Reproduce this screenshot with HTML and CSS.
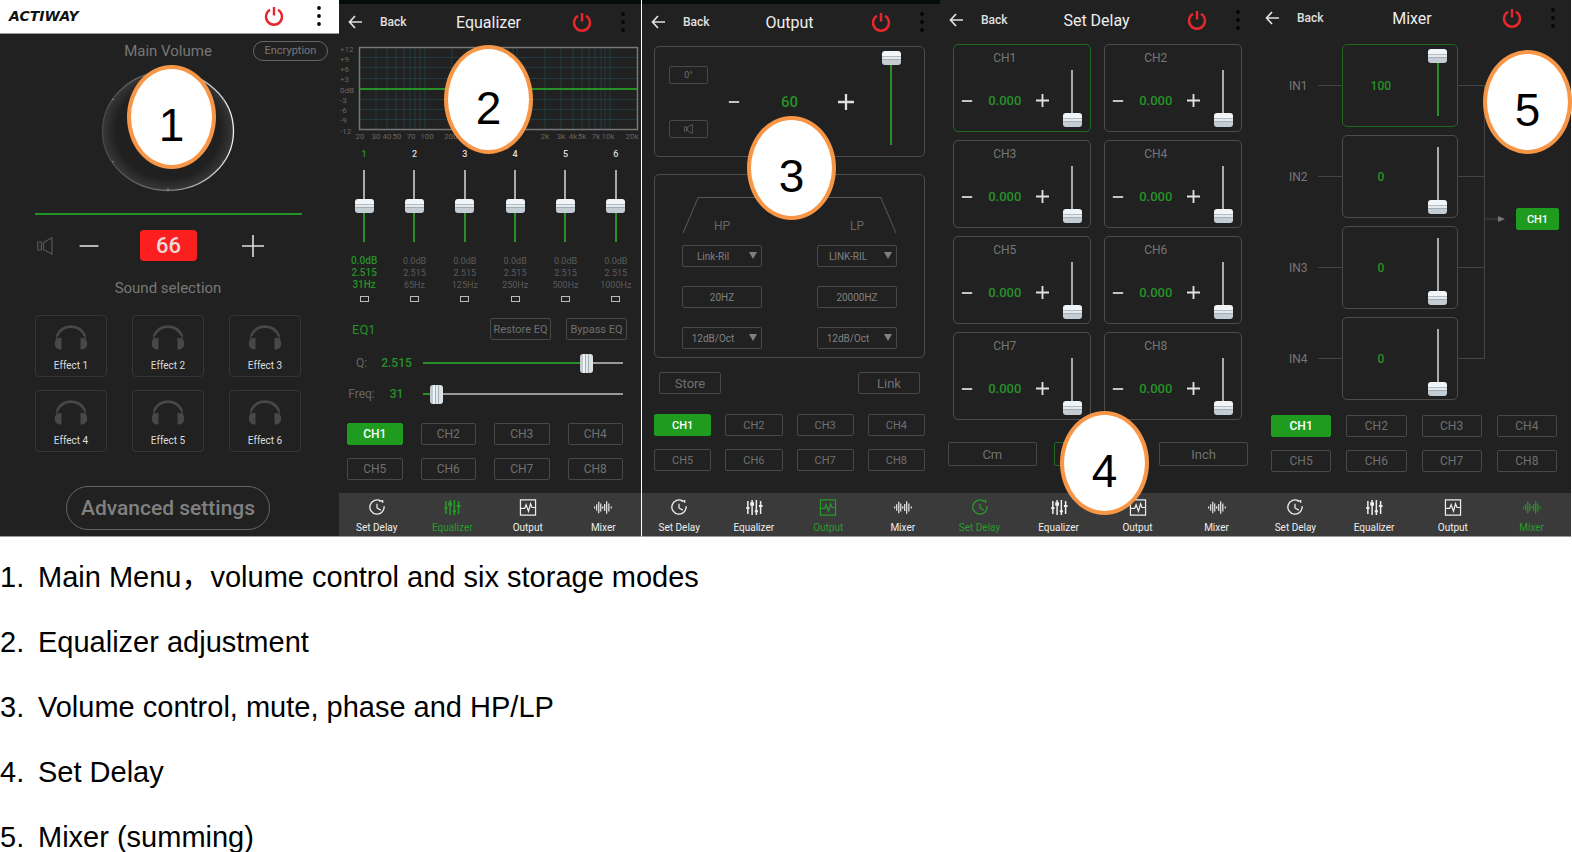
FILE: index.html
```html
<!DOCTYPE html>
<html lang="en">
<head>
<meta charset="utf-8">
<title>Actiway DSP app guide</title>
<link rel="stylesheet" href="styles.css">
</head>
<body>
<svg class="defs" aria-hidden="true">
  <symbol id="power" viewBox="0 0 20 20"><path d="M6 3.8a8 8 0 1 0 8 0M10 1v8.5" fill="none" stroke="#e5282c" stroke-width="2.4"/></symbol>
  <symbol id="dots" viewBox="0 0 4 20"><circle cx="2" cy="2" r="1.9"/><circle cx="2" cy="10" r="1.9"/><circle cx="2" cy="18" r="1.9"/></symbol>
  <symbol id="back" viewBox="0 0 14 14"><path d="M7 1L1.5 7 7 13M1.5 7H14" fill="none" stroke="currentColor" stroke-width="1.7"/></symbol>
  <symbol id="minus" viewBox="0 0 14 14"><path d="M1 7h12" stroke="currentColor"/></symbol>
  <symbol id="plus" viewBox="0 0 14 14"><path d="M0 7h14M7 0v14" stroke="currentColor"/></symbol>
  <symbol id="speaker" viewBox="0 0 16 18"><path d="M.8 5h3.600v8H.8zM6.500 5.500L15 .8v16.400L6.500 12.500z" fill="none" stroke="currentColor" stroke-width="1.200"/></symbol>
  <symbol id="phones" viewBox="0 0 34 25"><path d="M3 11C6 4 11 1.600 17 1.600S28 4 31 11" fill="none" stroke="currentColor" stroke-width="2.600"/><path d="M2.500 14C3 10 4 8 5.500 7M31.500 14C31 10 30 8 28.500 7" fill="none" stroke="currentColor" stroke-width="1.300"/><path d="M7.500 13v11.500C3 24.500.8 22.500.8 18.500S3 13 7.500 13zM26.500 13v11.500c4.500 0 6.700-2 6.700-6S31 13 26.500 13z" fill="currentColor"/></symbol>
  <symbol id="clock" viewBox="0 0 18 18"><path d="M13 2.200A7.500 7.500 0 1 0 16.400 7.500" fill="none" stroke="currentColor" stroke-width="1.400"/><path d="M9 5v4.500l4 2.300M11.300 2l4.500.2M14.500 1.200l.6 3" fill="none" stroke="currentColor" stroke-width="1.300"/></symbol>
  <symbol id="faders" viewBox="0 0 18 18"><path d="M2.500 2v14M7 1v16M11.500 1v16M16 2v14" stroke="currentColor" stroke-width="1.600"/><path d="M.8 9.500h3.400M5 4.500h4M5 6h4M9.800 13h3.400M14.200 7.500H18" stroke="currentColor" stroke-width="2.200"/></symbol>
  <symbol id="pulse" viewBox="0 0 18 18"><path d="M1 1h16v16H1zM1 10h4.500L7 6l2.500 7 2.200-8 1.500 4H17" fill="none" stroke="currentColor" stroke-width="1.300"/></symbol>
  <symbol id="wave" viewBox="0 0 20 18"><path d="M.7 8v2M3 5.500v7M5.300 2.500v13M7.500 4.500v9M9.700 7.500v3M11.900 5v8M14.100 2v14M16.500 4.500v9M19.200 8v2" stroke="currentColor" stroke-width="1.300"/></symbol>
</svg>

<main class="screens">
  <section class="screen home">
    <header class="brandbar">
      <span class="logo">ACTIWAY</span>
      <svg class="power"><use href="#power"/></svg>
      <svg class="dots"><use href="#dots"/></svg>
    </header>
    <div class="home-top"><h2>Main Volume</h2><button class="encrypt">Encryption</button></div>
    <svg class="knob" viewBox="0 0 134 122">
      <defs>
        <linearGradient id="rim"><stop offset="0" stop-color="#484848"/><stop offset=".5" stop-color="#777"/><stop offset="1" stop-color="#eee"/></linearGradient>
        <radialGradient id="face"><stop offset=".8" stop-color="#202020"/><stop offset="1" stop-color="#373737"/></radialGradient>
      </defs>
      <ellipse cx="67" cy="61" rx="65.500" ry="59.500" fill="url(#face)" stroke="url(#rim)" stroke-width="1.300"/>
      <path d="M11 29l2 1M11 92l2-1M123 92l-2-1M123 29l-2 1M67 118v3" stroke="#888"/>
    </svg>
    <hr class="level">
    <div class="volume">
      <button class="bare dim" aria-label="Mute"><svg class="i-speaker"><use href="#speaker"/></svg></button>
      <button class="bare" aria-label="Volume down"><svg class="i22"><use href="#minus"/></svg></button>
      <output>66</output>
      <button class="bare" aria-label="Volume up"><svg class="i22"><use href="#plus"/></svg></button>
    </div>
    <h2 class="sound">Sound selection</h2>
    <div class="effects">
      <button><svg><use href="#phones"/></svg>Effect 1</button>
      <button><svg><use href="#phones"/></svg>Effect 2</button>
      <button><svg><use href="#phones"/></svg>Effect 3</button>
      <button><svg><use href="#phones"/></svg>Effect 4</button>
      <button><svg><use href="#phones"/></svg>Effect 5</button>
      <button><svg><use href="#phones"/></svg>Effect 6</button>
    </div>
    <button class="advanced">Advanced settings</button>
    <span class="badge b1">1</span>
  </section>

  <section class="screen eq">
    <header class="bar">
      <button class="bare back"><svg><use href="#back"/></svg>Back</button><h1>Equalizer</h1>
      <svg class="power"><use href="#power"/></svg><svg class="dots"><use href="#dots"/></svg>
    </header>
    <svg class="chart" viewBox="0 0 302 100">
      <path d="M37 7v83M48 7v83M57 7v83M65 7v83M71 7v83M76 7v83M81 7v83M86 7v83M113 7v83M130 7v83M141 7v83M150 7v83M157 7v83M163 7v83M169 7v83M174 7v83M178 7v83M206 7v83M222 7v83M234 7v83M243 7v83M250 7v83M256 7v83M262 7v83M266 7v83M271 7v83M21 17.500h277M21 27.500h277M21 38.500h277M21 59.500h277M21 69.500h277M21 79.500h277" stroke="#213c41"/>
      <rect x="20.500" y="7.500" width="278" height="82" fill="none" stroke="#777" stroke-width="1.500"/>
      <path d="M21 49h277" stroke="#279128" stroke-width="2"/>
      <g class="axis"><text x="1" y="12">+12</text><text x="1" y="22">+9</text><text x="1" y="32">+6</text><text x="1" y="42">+3</text><text x="1" y="53">0dB</text><text x="1" y="63">-3</text><text x="1" y="73">-6</text><text x="1" y="83">-9</text><text x="1" y="94">-12</text></g>
      <g class="axis mid"><text x="21" y="99">20</text><text x="37" y="99">30</text><text x="48" y="99">40</text><text x="58" y="99">50</text><text x="72" y="99">70</text><text x="88" y="99">100</text><text x="112" y="99">200</text><text x="206" y="99">2k</text><text x="222" y="99">3k</text><text x="234" y="99">4k</text><text x="243" y="99">5k</text><text x="257" y="99">7k</text><text x="269" y="99">10k</text><text x="293" y="99">20k</text></g>
    </svg>
    <div class="bands">
      <div class="band on"><b>1</b><input class="v half" type="range" value="50" aria-label="Band 1 gain"><span>0.0dB</span><span>2.515</span><span>31Hz</span><input type="checkbox" aria-label="Band 1"></div>
      <div class="band"><b>2</b><input class="v half" type="range" value="50" aria-label="Band 2 gain"><span>0.0dB</span><span>2.515</span><span>65Hz</span><input type="checkbox" aria-label="Band 2"></div>
      <div class="band"><b>3</b><input class="v half" type="range" value="50" aria-label="Band 3 gain"><span>0.0dB</span><span>2.515</span><span>125Hz</span><input type="checkbox" aria-label="Band 3"></div>
      <div class="band"><b>4</b><input class="v half" type="range" value="50" aria-label="Band 4 gain"><span>0.0dB</span><span>2.515</span><span>250Hz</span><input type="checkbox" aria-label="Band 4"></div>
      <div class="band"><b>5</b><input class="v half" type="range" value="50" aria-label="Band 5 gain"><span>0.0dB</span><span>2.515</span><span>500Hz</span><input type="checkbox" aria-label="Band 5"></div>
      <div class="band"><b>6</b><input class="v half" type="range" value="50" aria-label="Band 6 gain"><span>0.0dB</span><span>2.515</span><span>1000Hz</span><input type="checkbox" aria-label="Band 6"></div>
    </div>
    <div class="eq-actions"><span>EQ1</span><button class="line">Restore EQ</button><button class="line">Bypass EQ</button></div>
    <div class="params">
      <label for="q">Q:</label><output>2.515</output><input id="q" class="h" type="range" value="84" style="--fill:84%">
      <label for="freq">Freq:</label><output>31</output><input id="freq" class="h" type="range" value="4" style="--fill:4%">
    </div>
    <div class="channels">
      <button class="line on">CH1</button><button class="line">CH2</button><button class="line">CH3</button><button class="line">CH4</button>
      <button class="line">CH5</button><button class="line">CH6</button><button class="line">CH7</button><button class="line">CH8</button>
    </div>
    <nav class="tabs">
      <a href="#delay"><svg><use href="#clock"/></svg>Set Delay</a><a href="#eq" class="on"><svg><use href="#faders"/></svg>Equalizer</a><a href="#output"><svg><use href="#pulse"/></svg>Output</a><a href="#mixer"><svg><use href="#wave"/></svg>Mixer</a>
    </nav>
    <span class="badge b2">2</span>
  </section>

  <section class="screen out">
    <header class="bar">
      <button class="bare back"><svg><use href="#back"/></svg>Back</button><h1>Output</h1>
      <svg class="power"><use href="#power"/></svg><svg class="dots"><use href="#dots"/></svg>
    </header>
    <div class="card gain">
      <div class="toggles"><button class="line">0°</button><button class="line" aria-label="Mute"><svg><use href="#speaker"/></svg></button></div>
      <button class="bare" aria-label="Decrease"><svg class="i12"><use href="#minus"/></svg></button>
      <output>60</output>
      <button class="bare" aria-label="Increase"><svg class="i16"><use href="#plus"/></svg></button>
      <input class="v full" type="range" value="100" aria-label="Output level">
    </div>
    <div class="card filters">
      <div class="passband">
        <svg viewBox="0 0 212 37" preserveAspectRatio="none"><path d="M1 36L16 .5H196L211 36" fill="none" stroke="#555"/></svg>
        <span>HP</span><span>LP</span>
      </div>
      <div class="fields">
        <span class="pick"><select aria-label="HP type"><option>Link-Ril</option></select></span>
        <span class="pick"><select aria-label="LP type"><option>LINK-RIL</option></select></span>
        <input type="text" value="20HZ" aria-label="HP frequency">
        <input type="text" value="20000HZ" aria-label="LP frequency">
        <span class="pick"><select aria-label="HP slope"><option>12dB/Oct</option></select></span>
        <span class="pick"><select aria-label="LP slope"><option>12dB/Oct</option></select></span>
      </div>
    </div>
    <div class="pair"><button class="line">Store</button><button class="line">Link</button></div>
    <div class="channels">
      <button class="line on">CH1</button><button class="line">CH2</button><button class="line">CH3</button><button class="line">CH4</button>
      <button class="line">CH5</button><button class="line">CH6</button><button class="line">CH7</button><button class="line">CH8</button>
    </div>
    <nav class="tabs">
      <a href="#delay"><svg><use href="#clock"/></svg>Set Delay</a><a href="#eq"><svg><use href="#faders"/></svg>Equalizer</a><a href="#output" class="on"><svg><use href="#pulse"/></svg>Output</a><a href="#mixer"><svg><use href="#wave"/></svg>Mixer</a>
    </nav>
    <span class="badge b3">3</span>
  </section>

  <section class="screen delay">
    <header class="bar">
      <button class="bare back"><svg><use href="#back"/></svg>Back</button><h1>Set Delay</h1>
      <svg class="power"><use href="#power"/></svg><svg class="dots"><use href="#dots"/></svg>
    </header>
    <div class="delays">
      <div class="card on"><h3>CH1</h3><button class="bare" aria-label="Less"><svg class="i12"><use href="#minus"/></svg></button><output>0.000</output><button class="bare" aria-label="More"><svg class="i13"><use href="#plus"/></svg></button><input class="v" type="range" value="0" aria-label="CH1 delay"></div>
      <div class="card"><h3>CH2</h3><button class="bare" aria-label="Less"><svg class="i12"><use href="#minus"/></svg></button><output>0.000</output><button class="bare" aria-label="More"><svg class="i13"><use href="#plus"/></svg></button><input class="v" type="range" value="0" aria-label="CH2 delay"></div>
      <div class="card"><h3>CH3</h3><button class="bare" aria-label="Less"><svg class="i12"><use href="#minus"/></svg></button><output>0.000</output><button class="bare" aria-label="More"><svg class="i13"><use href="#plus"/></svg></button><input class="v" type="range" value="0" aria-label="CH3 delay"></div>
      <div class="card"><h3>CH4</h3><button class="bare" aria-label="Less"><svg class="i12"><use href="#minus"/></svg></button><output>0.000</output><button class="bare" aria-label="More"><svg class="i13"><use href="#plus"/></svg></button><input class="v" type="range" value="0" aria-label="CH4 delay"></div>
      <div class="card"><h3>CH5</h3><button class="bare" aria-label="Less"><svg class="i12"><use href="#minus"/></svg></button><output>0.000</output><button class="bare" aria-label="More"><svg class="i13"><use href="#plus"/></svg></button><input class="v" type="range" value="0" aria-label="CH5 delay"></div>
      <div class="card"><h3>CH6</h3><button class="bare" aria-label="Less"><svg class="i12"><use href="#minus"/></svg></button><output>0.000</output><button class="bare" aria-label="More"><svg class="i13"><use href="#plus"/></svg></button><input class="v" type="range" value="0" aria-label="CH6 delay"></div>
      <div class="card"><h3>CH7</h3><button class="bare" aria-label="Less"><svg class="i12"><use href="#minus"/></svg></button><output>0.000</output><button class="bare" aria-label="More"><svg class="i13"><use href="#plus"/></svg></button><input class="v" type="range" value="0" aria-label="CH7 delay"></div>
      <div class="card"><h3>CH8</h3><button class="bare" aria-label="Less"><svg class="i12"><use href="#minus"/></svg></button><output>0.000</output><button class="bare" aria-label="More"><svg class="i13"><use href="#plus"/></svg></button><input class="v" type="range" value="0" aria-label="CH8 delay"></div>
    </div>
    <div class="units"><button class="line">Cm</button><button class="line picked" aria-label="Time"></button><button class="line">Inch</button></div>
    <nav class="tabs">
      <a href="#delay" class="on"><svg><use href="#clock"/></svg>Set Delay</a><a href="#eq"><svg><use href="#faders"/></svg>Equalizer</a><a href="#output"><svg><use href="#pulse"/></svg>Output</a><a href="#mixer"><svg><use href="#wave"/></svg>Mixer</a>
    </nav>
    <span class="badge b4">4</span>
  </section>

  <section class="screen mix">
    <header class="bar">
      <button class="bare back"><svg><use href="#back"/></svg>Back</button><h1>Mixer</h1>
      <svg class="power"><use href="#power"/></svg><svg class="dots"><use href="#dots"/></svg>
    </header>
    <div class="routing">
      <div class="inputs">
        <div class="input"><label for="in1">IN1</label><i></i><div class="card on"><output>100</output><input id="in1" class="v full" type="range" value="100"></div><i></i></div>
        <div class="input"><label for="in2">IN2</label><i></i><div class="card"><output>0</output><input id="in2" class="v" type="range" value="0"></div><i></i></div>
        <div class="input"><label for="in3">IN3</label><i></i><div class="card"><output>0</output><input id="in3" class="v" type="range" value="0"></div><i></i></div>
        <div class="input"><label for="in4">IN4</label><i></i><div class="card"><output>0</output><input id="in4" class="v" type="range" value="0"></div><i></i></div>
      </div>
      <div class="bus">
        <svg viewBox="0 0 20 8"><path d="M0 4h14" stroke="#444"/><path d="M13 1l7 3-7 3z" fill="#777"/></svg>
        <button class="line on">CH1</button>
      </div>
    </div>
    <div class="channels">
      <button class="line on">CH1</button><button class="line">CH2</button><button class="line">CH3</button><button class="line">CH4</button>
      <button class="line">CH5</button><button class="line">CH6</button><button class="line">CH7</button><button class="line">CH8</button>
    </div>
    <nav class="tabs">
      <a href="#delay"><svg><use href="#clock"/></svg>Set Delay</a><a href="#eq"><svg><use href="#faders"/></svg>Equalizer</a><a href="#output"><svg><use href="#pulse"/></svg>Output</a><a href="#mixer" class="on"><svg><use href="#wave"/></svg>Mixer</a>
    </nav>
    <span class="badge b5">5</span>
  </section>
</main>

<ol class="legend">
  <li><span>1.</span>Main Menu，volume control and six storage modes</li>
  <li><span>2.</span>Equalizer adjustment</li>
  <li><span>3.</span>Volume control, mute, phase and HP/LP</li>
  <li><span>4.</span>Set Delay</li>
  <li><span>5.</span>Mixer (summing)</li>
</ol>
</body>
</html>
```

FILE: styles.css
```css
* { box-sizing: border-box; }
body { margin: 0; background: #fff; font-family: "Liberation Sans", "Noto Sans CJK SC", sans-serif; }
h1, h2, h3 { margin: 0; font-weight: 400; }
.defs { display: none; }
svg { display: block; flex: none; }
button, input, select { font: inherit; color: inherit; margin: 0; padding: 0; }

.screens { display: grid; grid-template-columns: 339fr 302fr 299fr 316fr 315fr; padding-right: 1px; }
.screen {
  position: relative; display: flex; flex-direction: column; min-height: 537px; min-width: 0;
  background: #212121; color: #777; border-bottom: 1px solid #999;
  font-family: Roboto, "Liberation Sans", sans-serif; font-size: 12px;
}

/* shared controls */
.bare { display: flex; align-items: center; justify-content: center; background: none; border: 0; color: #e0e0e0; }
.line {
  display: flex; align-items: center; justify-content: center;
  height: 22px; background: none; border: 1px solid #484848; border-radius: 2px; color: #707070;
}
.line.on { background: #1f9b20; border-color: #1f9b20; color: #fff; font-weight: 500; }
.card { border: 1px solid #4c4c4c; border-radius: 5px; }
.card.on { border-color: #1d6a20; }
output { color: #279128; font-weight: 500; text-align: center; }
.i12, .i13, .i16 { stroke-width: 2px; }
.i12 { width: 12px; height: 12px; }
.i13 { width: 13px; height: 13px; }
.i16 { width: 16px; height: 16px; }
.i22 { width: 22px; height: 22px; stroke-width: 1px; }

input[type="range"] { appearance: none; background: none; outline: none; }
.v {
  writing-mode: vertical-lr; direction: rtl; width: 20px;
  background: linear-gradient(#aaa, #aaa) center / 2px calc(100% - 14px) no-repeat !important;
}
.v.half { background-image: linear-gradient(#aaa 50%, #279128 50%) !important; }
.v.full { background-image: linear-gradient(#279128, #279128) !important; }
.v::-webkit-slider-thumb {
  appearance: none; width: 19px; height: 14px; border-radius: 3px;
  background: linear-gradient(#f2f5f7 0 35%, #b4bdc3 35% 43%, #e3e9ec 43% 56%, #a2adb4 56% 64%, #c3cdd3 64%);
}
.h { background: linear-gradient(90deg, #279128 var(--fill), #999 var(--fill)) center / 100% 2px no-repeat !important; height: 20px; }
.h::-webkit-slider-thumb {
  appearance: none; width: 13px; height: 19px; border-radius: 3px;
  background: linear-gradient(90deg, #c3ccd1 0 25%, #f2f5f7 25% 38%, #a2adb4 38% 46%, #e3e9ec 46% 58%, #a2adb4 58% 66%, #dce3e7 66%);
}

/* title bar */
.bar { display: grid; grid-template-columns: 75px 1fr 38px 40px; align-items: center; height: 40px; color: #eee; }
.eq .bar, .out .bar { border-top: 4px solid #060b0b; }
.bar h1 { font-size: 16px; text-align: center; }
.back { justify-content: flex-start; gap: 18px; padding-left: 9px; font-size: 12px; font-weight: 500; }
.back svg { width: 14px; height: 14px; }
.power { width: 20px; height: 20px; }
.bar .power { justify-self: center; }
.dots { width: 4px; height: 20px; fill: #050505; }
.bar .dots { margin-left: 20px; }

/* tabs */
.tabs { display: grid; grid-template-columns: repeat(4, 1fr); height: 43px; margin-top: auto; background: #3a3a3a; }
.tabs a { display: flex; flex-direction: column; align-items: center; gap: 6px; padding-top: 6px; color: #eee; font-size: 10px; line-height: 12px; text-decoration: none; }
.tabs svg { width: 18px; height: 17px; }
.tabs a.on { color: #279b2a; }
.channels { display: grid; grid-template-columns: repeat(4, 1fr); gap: 13px 18px; }

/* home */
.home { padding-right: 3px; }
.brandbar { display: flex; align-items: center; height: 34px; margin-right: -3px; padding: 0 18px 2px 9px; background: #fff; border-bottom: 1px solid #999; }
.logo { flex: 1; color: #111; font: italic 700 14px/16px "DejaVu Sans", sans-serif; }
.brandbar .dots { margin-left: 33px; }
.home-top { display: grid; grid-template-columns: 1fr auto 1fr; align-items: center; height: 33px; padding-right: 8px; padding-left: 8px; }
.home-top h2, .sound { grid-column: 2; font-size: 15px; line-height: 20px; }
.encrypt { justify-self: end; width: 75px; height: 20px; background: none; border: 1px solid #666; border-radius: 10px; font-size: 11px; }
.knob { align-self: center; width: 134px; height: 122px; margin-top: 3px; }
.level { width: 267px; height: 2px; margin: 21px auto 0; border: 0; background: #229326; }
.volume { display: grid; grid-template-columns: 24px 64px 95fr 74fr; align-items: center; height: 61px; padding: 0 46px 0 33px; }
.volume output { justify-self: center; width: 57px; height: 31px; border-radius: 4px; background: #fc1f20; color: #ecd9d9; font-size: 22px; line-height: 31px; }
.volume .dim { color: #555; }
.i-speaker { width: 16px; height: 18px; }
.sound { height: 39px; line-height: 24px; text-align: center; }
.effects { display: grid; grid-template-columns: repeat(3, 72px); justify-content: center; gap: 13px 25px; }
.effects button { display: flex; flex-direction: column; align-items: center; gap: 9px; height: 62px; padding-top: 9px; background: none; border: 1px solid #363636; border-radius: 4px; color: #ddd; font-size: 10px; line-height: 14px; }
.effects svg { width: 34px; height: 25px; color: #484848; }
.advanced { align-self: center; width: 204px; height: 44px; margin-top: 34px; background: none; border: 1px solid #666; border-radius: 22px; color: #808080; font-size: 21px; font-weight: 500; }

/* equalizer */
.chart { width: 100%; }
.axis { fill: #666; font-size: 8px; }
.mid { text-anchor: middle; }
.bands { display: grid; grid-template-columns: repeat(6, 1fr); padding-top: 6px; }
.band { display: flex; flex-direction: column; align-items: center; font-size: 9px; line-height: 12px; color: #5c5c5c; }
.band b { height: 17px; line-height: 16px; font-weight: 500; color: #ddd; }
.band .v { height: 86px; margin-bottom: 6px; }
.band.on, .band.on b { color: #279128; }
.band.on span { font-size: 10px; font-weight: 500; }
.band [type="checkbox"] { appearance: none; width: 9px; height: 6px; margin-top: 5px; border: 1px solid #bbb; }
.eq-actions { display: grid; grid-template-columns: 1fr 61px 61px; gap: 15px; align-items: center; margin-top: 16px; padding: 0 14px 0 13px; font-size: 11px; }
.eq-actions span { color: #279128; font-size: 13px; }
.params { display: grid; grid-template-columns: 35px 35px 1fr; row-gap: 11px; align-items: center; margin: 13px 0 19px; padding: 0 18px 0 5px; }
.params label { text-align: center; color: #666; }
.params .h { width: calc(100% - 9px); justify-self: end; }
.eq .channels { padding: 0 18px 0 8px; }

/* output */
.out { border-left: 1px solid #fff; }
.out .bar { margin-bottom: 6px; }
.out .card { margin: 0 15px 0 12px; }
.gain { display: grid; grid-template-columns: 53fr 52fr 60fr 54fr 36fr 15fr; align-items: center; height: 111px; }
.gain output { font-size: 15px; }
.gain .v { height: 101px; justify-self: center; }
.toggles { display: grid; gap: 36px; padding-left: 14px; }
.toggles .line { height: 18px; font-size: 9px; }
.toggles svg { width: 9px; height: 10px; }
.out .filters { height: 184px; margin-top: 17px; padding: 22px 27px 0; }
.passband { position: relative; display: grid; grid-template-columns: 80px 80px; justify-content: space-between; height: 48px; padding-top: 21px; line-height: 16px; text-align: center; color: #666; }
.passband svg { position: absolute; inset: 0; width: 100%; height: 37px; }
.fields { display: grid; grid-template-columns: 80px 80px; justify-content: space-between; gap: 19px; font-size: 10px; }
.fields input, .fields select { width: 100%; height: 22px; background: none; border: 1px solid #484848; border-radius: 2px; text-align: center; color: #808080; }
.fields select { appearance: none; padding-right: 18px; text-align-last: center; }
.pick { position: relative; }
.pick::after { content: ""; position: absolute; right: 5px; top: 7px; border: 4px solid transparent; border-top: 7px solid #808080; border-bottom: 0; }
.pair { display: flex; justify-content: space-between; margin: 14px 20px 20px 17px; font-size: 13px; }
.pair .line { width: 62px; }
.out .channels { gap: 13px 14px; padding: 0 15px 0 12px; font-size: 11px; }

/* delay */
.delays { display: grid; grid-template-columns: 1fr 1fr; gap: 8px 13px; padding: 4px 14px 0 13px; }
.delays .card { display: grid; grid-template-columns: 26fr 51fr 25fr 36fr; grid-template-rows: 25px 61px; align-items: center; height: 88px; }
.delays h3 { grid-column: 2; font-size: 12px; text-align: center; }
.delays .bare { grid-row: 2; }
.delays output { grid-row: 2; font-size: 13px; }
.delays .v { grid-area: 1 / 4 / 3; place-self: end center; height: 64px; margin-bottom: 4px; }
.units { display: grid; grid-template-columns: repeat(3, 1fr); gap: 17px; margin-top: 22px; padding: 0 8px; font-size: 13px; }
.units .line { height: 24px; }
.units .picked { border-color: #1d6a20; }

/* mixer */
.mix .bar { height: 36px; }
.routing { display: flex; padding: 8px 12px 0 33px; }
.inputs { display: grid; gap: 8px; flex: 1; }
.input { display: grid; grid-template-columns: 29px 24px 1fr 26px; align-items: center; }
.input i { height: 1px; background: #444; }
.input .card { display: grid; grid-template-columns: 77fr 39fr; align-items: center; height: 83px; }
.input output { font-size: 12px; }
.input .v { height: 74px; justify-self: center; }
.bus { display: flex; align-items: center; gap: 11px; margin: 41px 0; padding-bottom: 6px; border-left: 1px solid #444; }
.bus svg { width: 20px; height: 8px; }
.bus .line { width: 43px; font-size: 11px; }
.mix .channels { gap: 13px 15px; margin-top: 15px; padding: 0 14px 0 15px; }

/* numbered callouts */
.badge {
  position: absolute; z-index: 2; display: flex; align-items: center; justify-content: center;
  width: 89px; height: 104px; padding-top: 16px; border: 4px solid #f79646; border-radius: 50%;
  background: #fff; color: #000; font: 46px/46px "Liberation Sans", sans-serif;
}
.b1 { left: 127px; top: 65px; }
.b2 { left: 105px; top: 45px; height: 109px; }
.b3 { left: 105px; top: 116px; }
.b4 { left: 120px; top: 411px; }
.b5 { right: -1px; top: 50px; }

.legend { display: grid; gap: 35px; margin: 25px 0 0; padding: 0; list-style: none; font-size: 29px; line-height: 30px; color: #000; }
.legend li { display: grid; grid-template-columns: 38px 1fr; }
```
